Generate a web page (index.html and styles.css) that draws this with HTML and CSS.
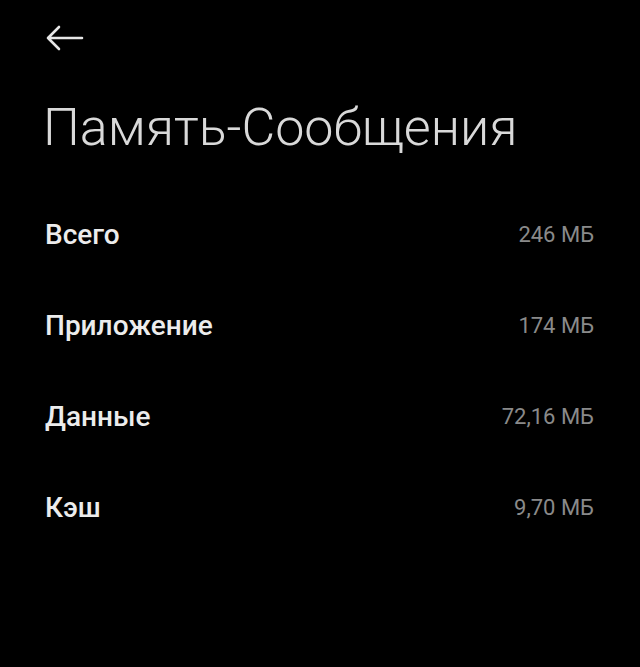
FILE: index.html
```html
<!DOCTYPE html>
<html lang="ru">
<head>
<meta charset="utf-8">
<link rel="stylesheet" href="styles.css">
</head>
<body>
<div class="screen">
  <div class="topbar">
    <svg class="back" width="40" height="28" viewBox="0 0 40 28">
      <path d="M3 14 H37 M14 3 L3 14 L14 25" fill="none" stroke="#e6e6e6" stroke-width="2.6" stroke-linecap="round" stroke-linejoin="round"/>
    </svg>
  </div>
  <h1 class="title">Память-Сообщения</h1>
  <ul class="list">
    <li class="row"><span class="label">Всего</span><span class="value">246 МБ</span></li>
    <li class="row"><span class="label">Приложение</span><span class="value">174 МБ</span></li>
    <li class="row"><span class="label">Данные</span><span class="value">72,16 МБ</span></li>
    <li class="row"><span class="label">Кэш</span><span class="value">9,70 МБ</span></li>
  </ul>
</div>
</body>
</html>
```
FILE: styles.css
```css
html, body {
  margin: 0;
  padding: 0;
  background: #000;
}
.screen {
  width: 640px;
  height: 667px;
  background: #000;
  font-family: Roboto, "Noto Sans", sans-serif;
  color: #ececec;
  box-sizing: border-box;
  padding: 0 46px 0 45px;
  overflow: hidden;
}
.topbar {
  height: 76px;
  display: flex;
  align-items: center;
}
.back {
  display: block;
}
.title {
  margin: -3px 0 0 -2px;
  font-weight: 300;
  font-size: 52px;
  line-height: 110px;
  color: #d9d9d9;
  white-space: nowrap;
}
.list {
  list-style: none;
  margin: 6px 0 0 0;
  padding: 0;
}
.row {
  height: 91px;
  display: flex;
  align-items: center;
  justify-content: space-between;
}
.label {
  font-size: 28px;
  font-weight: 500;
  color: #ececec;
}
.value {
  font-size: 22px;
  color: #8a8a8a;
}
```
